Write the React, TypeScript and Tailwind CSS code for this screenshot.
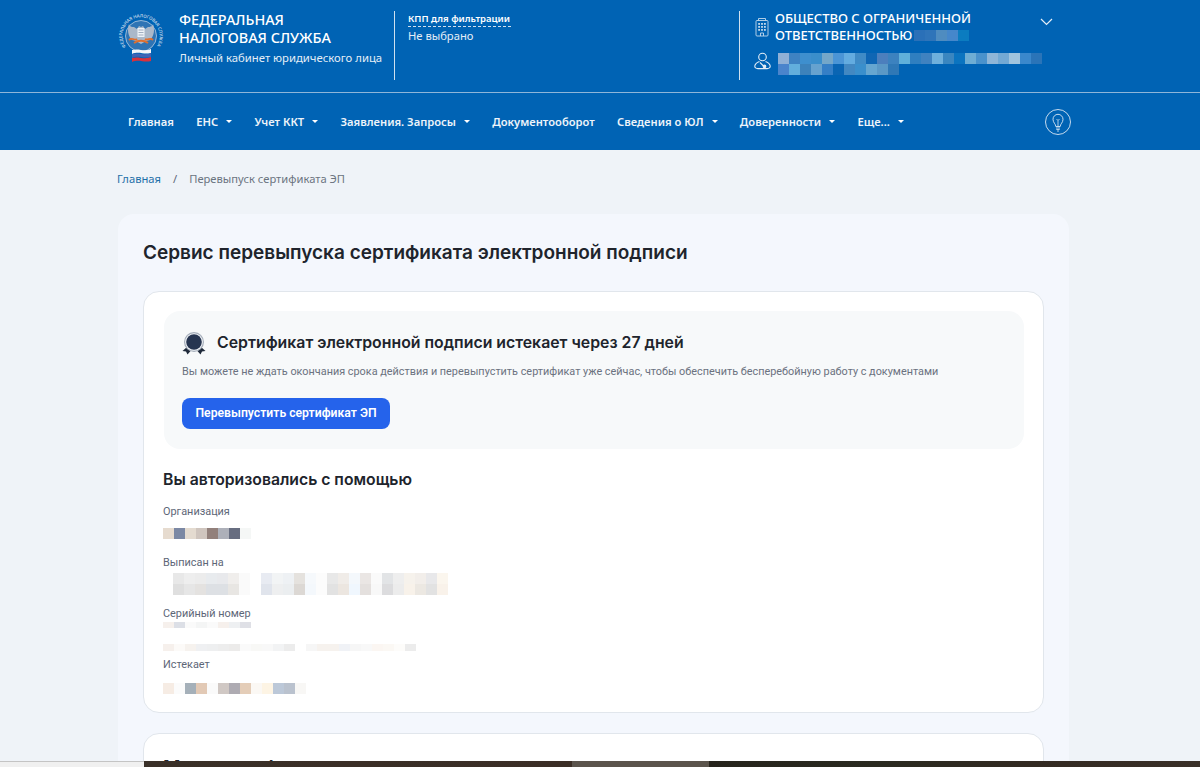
const navItems = [
  { name: "Главная" },
  { name: "ЕНС", arrow: true },
  { name: "Учет ККТ", arrow: true },
  { name: "Заявления. Запросы", arrow: true },
  { name: "Документооборот" },
  { name: "Сведения о ЮЛ", arrow: true },
  { name: "Доверенности", arrow: true },
  { name: "Еще...", arrow: true },
];

function Cells({ colors, size = "w-[11px] h-[11px]" }: { colors: string[]; size?: string }) {
  return (
    <div className="flex">
      {colors.map((c, i) => (
        <div key={i} className={size} style={{ backgroundColor: c }} />
      ))}
    </div>
  );
}

function Emblem() {
  return (
    <svg width="48" height="50" viewBox="0 0 48 50">
      <defs>
        <path id="emblem-ring" d="M9 34A18.600 18.600 0 1 1 39 34" />
      </defs>
      <text fontSize="4.500" fontWeight="600" fill="#b9d0e6" fontFamily="'Noto Sans', sans-serif">
        <textPath href="#emblem-ring" textLength="80">
          ФЕДЕРАЛЬНАЯ НАЛОГОВАЯ СЛУЖБА
        </textPath>
      </text>
      <circle cx="24" cy="23" r="15.500" fill="#2f74b4" stroke="#c9d8e8" strokeWidth="0.700" />
      <g transform="translate(0 1)">
        <path d="M12 10c1 3 3 3 5 3l3 2 2-3 2 1 2-1 2 3 3-2c2 0 4 0 5-3 2 6 1 12-3 16l-4 1-5 3-5-3-4-1c-4-4-5-10-3-16z" fill="#aab8c9" />
        <rect x="20.500" y="14" width="7" height="9" fill="#eef3f8" />
        <path d="M21.500 16h5M21.500 18.500h5M21.500 21h5" stroke="#8d9db2" strokeWidth="0.800" />
        <path d="M12 26c3-3 6 1 8-1M28 25c3 2 5-2 8 1M17 29c4-3 10-3 14 0" stroke="#e0702f" strokeWidth="1.800" fill="none" />
      </g>
      <path d="M15 37c7-2 12 2 19-1v4c-7 2-12-2-19 1z" fill="#f4f6fa" />
      <path d="M15 41c7-2 12 2 19-1v4c-7 2-12-2-19 1z" fill="#3f63b5" />
      <path d="M15 45c7-2 12 2 19-1v4c-7 2-12-2-19 1z" fill="#d8313c" />
    </svg>
  );
}

function BuildingIcon() {
  return (
    <svg width="14" height="20" viewBox="0 0 14 20" fill="none" stroke="#c3d9ec" strokeWidth="0.900">
      <path d="M3.500 3.500V1.500h7v2" />
      <rect x="1" y="3.500" width="12" height="15.500" rx="1" />
      <g fill="#c3d9ec" stroke="none">
        <rect x="3.200" y="6" width="1.800" height="1.800" />
        <rect x="6.100" y="6" width="1.800" height="1.800" />
        <rect x="9" y="6" width="1.800" height="1.800" />
        <rect x="3.200" y="9" width="1.800" height="1.800" />
        <rect x="6.100" y="9" width="1.800" height="1.800" />
        <rect x="9" y="9" width="1.800" height="1.800" />
        <rect x="3.200" y="12" width="1.800" height="1.800" />
        <rect x="6.100" y="12" width="1.800" height="1.800" />
        <rect x="9" y="12" width="1.800" height="1.800" />
      </g>
      <path d="M5.500 19v-3h3v3" />
    </svg>
  );
}

function PersonIcon() {
  return (
    <svg width="17" height="18" viewBox="0 0 17 18" fill="none" stroke="#e4eef7" strokeWidth="1.100">
      <circle cx="8.500" cy="5" r="3.800" />
      <path d="M5.500 9.500C3 10.500 1 12 .8 14c-.1 1.600 1.200 2.600 3 2.600h9.400c1.800 0 3.100-1 3-2.600-.2-2-2.200-3.500-4.700-4.500" />
      <path d="M6 10.500l3.500 3.500" />
      <circle cx="10.500" cy="14.300" r="1.300" fill="#e4eef7" />
    </svg>
  );
}

function BulbIcon() {
  return (
    <svg width="26" height="26" viewBox="0 0 26 26" fill="none" stroke="#dbe8f4">
      <circle cx="13" cy="13" r="12.500" strokeWidth="0.900" />
      <path d="M10.800 17.500c0-2.500-2.800-3.800-2.800-7.200a5 5 0 0 1 10 0c0 3.400-2.800 4.700-2.800 7.200z" strokeWidth="0.900" />
      <path d="M11 19h4M11.300 20.500h3.400M12 22h2M13 17.500v-6l-1.500-1.500M13 11.500l1.500-1.500" strokeWidth="0.800" />
    </svg>
  );
}

function MedalIcon() {
  return (
    <svg width="24" height="23" viewBox="0 0 24 23">
      <path d="M5 15l-4.500 4 3.500.5 1.500 3 3.500-4zM19 15l4.500 4-3.500.5-1.500 3-3.500-4z" fill="#1f2a3a" />
      <circle cx="12" cy="10" r="10" fill="#a4adb9" />
      <circle cx="12" cy="10" r="8.800" fill="#f5f7fa" />
      <circle cx="12" cy="10" r="7.800" fill="#263550" />
    </svg>
  );
}

function Arrow() {
  return <span className="ml-[8px] mb-[1px] w-0 h-0 border-x-[3px] border-x-transparent border-t-[3px] border-t-white" />;
}

function Field({
  label,
  className,
  children,
}: {
  label: string;
  className?: string;
  children: React.ReactNode;
}) {
  return (
    <div className={className}>
      <div className="font-['Roboto',sans-serif] text-[10.900px] leading-[16px] text-[#5d6677]">{label}</div>
      {children}
    </div>
  );
}

export default function App() {
  return (
    <div className="relative h-[767px] overflow-hidden bg-[#eff3f8] font-['Inter','Liberation_Sans',sans-serif]">
      <header className="bg-[#0063b4] text-white font-['Noto_Sans','Open_Sans',sans-serif]">
        <div className="h-[93px] border-b border-[#8fb6d9] flex pl-[117px] pt-[11px]">
          <div className="w-[277px] flex">
            <div className="w-[62px] mt-[2px]">
              <Emblem />
            </div>
            <div>
              <div className="text-[14.400px] leading-[18px] font-medium">
                ФЕДЕРАЛЬНАЯ
                <br />
                НАЛОГОВАЯ СЛУЖБА
              </div>
              <div className="mt-[3px] text-[11.300px] leading-[16px] text-[#e4eef7]">Личный кабинет юридического лица</div>
            </div>
          </div>
          <div className="w-[345px] h-[69px] border-l border-[#cfe0ef] pl-[13px]">
            <div className="w-[103px] mt-[1px] whitespace-nowrap text-[9.500px] leading-[14px] font-semibold border-b border-dashed border-[#cfe0ef]">
              КПП для фильтрации
            </div>
            <div className="mt-[1px] text-[11.200px] leading-[16px] text-[#e4eef7]">Не выбрано</div>
          </div>
          <div className="w-[320px] h-[69px] border-l border-[#cfe0ef] pl-[15px] relative">
            <div className="flex -mt-[1px]">
              <div className="mt-[7px] w-[20px]">
                <BuildingIcon />
              </div>
              <div className="text-[13px] leading-[17px] font-medium">
                ОБЩЕСТВО С ОГРАНИЧЕННОЙ
                <br />
                <span className="flex items-center">
                  ОТВЕТСТВЕННОСТЬЮ
                  <span className="ml-[2px]">
                    <Cells colors={["#2a70b8", "#2f74b9", "#4f8cc0", "#4587cb", "#0b7cc0"]} />
                  </span>
                </span>
              </div>
            </div>
            <div className="flex mt-[9px]">
              <div className="-mt-[1px] w-[24px] -ml-[1px]">
                <PersonIcon />
              </div>
              <div>
                <Cells
                  colors={["#8fb0d6", "#3e82c2", "#3e8fce", "#3a8ecb", "#74a7c9", "#4b95d6", "#63ace0", "#3f8bc6", "#0f66b4", "#4c7fbd", "#3c82bf", "#5fb0da", "#2f7fc0", "#3f82c0", "#6fb0dc", "#3a86c0", "#0b74c0", "#6eadd4", "#4a92cc", "#8fb6d8", "#73a9d4", "#a0c4de", "#3a88cc", "#2a74b8"]}
                />
                <Cells
                  colors={["#4a84cc", "#62aedc", "#3c82bb", "#66a2cf", "#357fc6", "#0a65b3", "#4288c2", "#3a8fcc", "#66a6d0", "#5a98c6", "#2f78b6"]}
                />
              </div>
            </div>
            <svg className="absolute left-[300px] top-[7px]" width="13" height="8" viewBox="0 0 13 8" fill="none" stroke="#e4eef7" strokeWidth="1.200">
              <path d="M1 1l5.500 5.500L12 1" />
            </svg>
          </div>
        </div>
        <nav className="h-[57px] flex items-center justify-between pl-[128px] pr-[129px]">
          <div className="flex items-center gap-[22.300px] pt-[1px] text-[11.200px] font-semibold text-[#eef4fa]">
            {navItems.map((item) => (
              <div key={item.name} className="flex items-center">
                {item.name}
                {item.arrow && <Arrow />}
              </div>
            ))}
          </div>
          <BulbIcon />
        </nav>
      </header>

      <div className="px-[117px] pt-[22px] flex items-center text-[11.200px] leading-[14px] font-['Noto_Sans',sans-serif]">
        <span className="text-[#1e6fa8]">Главная</span>
        <span className="mx-[12px] text-[#5d6677]">/</span>
        <span className="text-[#6b7480]">Перевыпуск сертификата ЭП</span>
      </div>

      <main className="ml-[118px] mt-[28px] w-[951px] rounded-[16px] bg-[#f4f7fd] px-[25px] pt-[26px] pb-[26px]">
        <h1 className="text-[19px] leading-[26px] font-semibold text-[#20242c]">
          Сервис перевыпуска сертификата электронной подписи
        </h1>

        <section className="mt-[25px] h-[422px] rounded-[16px] border border-[#e1e6ec] bg-white px-[19px] pt-[19px]">
          <div className="ml-[1px] h-[138px] rounded-[16px] bg-[#f7f9fa] pl-[18px] pr-[19px] pt-[20px]">
            <div className="flex items-center">
              <MedalIcon />
              <div className="ml-[11px] text-[15.850px] leading-[24px] font-semibold text-[#20242c]">
                Сертификат электронной подписи истекает через 27 дней
              </div>
            </div>
            <p className="mt-[9px] font-['Roboto',sans-serif] text-[10.870px] leading-[16px] text-[#6b7280]">
              Вы можете не ждать окончания срока действия и перевыпустить сертификат уже сейчас, чтобы обеспечить бесперебойную работу с документами
            </p>
            <button className="mt-[18px] h-[31px] w-[208px] rounded-[8px] bg-[#2563eb] font-['Roboto',sans-serif] text-[12.200px] font-semibold text-white">
              Перевыпустить сертификат ЭП
            </button>
          </div>

          <h2 className="mt-[19px] text-[15.750px] leading-[24px] font-semibold text-[#20242c]">Вы авторизовались с помощью</h2>

          <Field label="Организация" className="mt-[12px]">
            <div className="mt-[8px]">
              <Cells colors={["#e6dbcf", "#7b88a4", "#e4dbd0", "#cfc5be", "#92807b", "#adb0b9", "#676d80", "#f5f7f6"]} />
            </div>
          </Field>
          <Field label="Выписан на" className="mt-[16px]">
            <div className="flex ml-[10px] mt-[2px]">
              <div className="flex flex-col">
                <Cells colors={["#e8e8e8", "#eeeeee", "#ececec", "#e8ebee", "#e8e9ec", "#f0eeec", "#fafafa"]} />
                <Cells colors={["#dfdfdf", "#e6e6e6", "#e4e2e0", "#dde0e4", "#dde0e4", "#e8e6e3", "#fafafa"]} />
              </div>
              <div className="flex flex-col ml-[11px]">
                <Cells colors={["#e8ebf2", "#f2f4f5", "#eef1f4", "#e5e2de", "#f6f9fc", "#fcfcfc", "#e8e8e8", "#f0ece8", "#f4f8fc", "#eae6e4", "#fafafa", "#e2e4e6", "#eeeeee", "#f6f2ec", "#f2eeea", "#e8e8ea", "#fbf6ee"]} />
                <Cells colors={["#e0e4ec", "#eeeff0", "#ebeef0", "#dcd8d4", "#f4f8fc", "#fcfcfc", "#e2e2e2", "#ece6e0", "#f0f7fe", "#e4e0de", "#f8f8f8", "#dcdcde", "#ececec", "#f8f2ea", "#ece8e2", "#e2e2e2", "#f9f2ea"]} />
              </div>
            </div>
          </Field>
          <Field label="Серийный номер" className="mt-[11px]">
            <div>
              <Cells size="w-[11px] h-[6px]" colors={["#f6f0ec", "#dcdfe6", "#fafafa", "#f4f5f5", "#fafafa", "#f6f0ec", "#eef0f2", "#dfe0e6"]} />
            </div>
            <div className="mt-[16px]">
              <Cells size="w-[11px] h-[7px]" colors={["#f6f0ec", "#fcfaf8", "#f6f2ee", "#eff0f2", "#eeeff0", "#ededed", "#ecebea", "#fafafa", "#f8f8f6", "#f8f8f8", "#f2f3f4", "#ececec", "#ffffff", "#f6f6f6", "#f6f2ee", "#f6f2ee", "#f0f2f6", "#f6f6f6", "#f8f8f8", "#fbf6f2", "#fbf8f4", "#fdfcfa", "#ececec"]} />
            </div>
          </Field>
          <Field label="Истекает" className="mt-[6px]">
            <div className="mt-[10px]">
              <Cells colors={["#f6ece4", "#fbfbfb", "#a5b0b9", "#e2c9b5", "#fafafa", "#d0c8c4", "#aeabb2", "#e4cdb8", "#fbf8f4", "#fdf4e4", "#bcc8d8", "#bac2ce", "#f8f7f5"]} />
            </div>
          </Field>
        </section>

        <section className="mt-[20px] h-[120px] rounded-[16px] border border-[#e1e6ec] bg-white pl-[19px] pt-[22px]">
          <div className="text-[19px] leading-[24px] font-semibold text-[#20242c]">Мои сертификаты</div>
        </section>
      </main>

      <div className="absolute left-0 right-0 bottom-0 h-[6px] flex">
        <div className="w-[144px] bg-[#f0f0f0] border-t border-[#c4c4c4]" />
        <div className="w-[428px] bg-[linear-gradient(90deg,#3a3028,#3b2e26)]" />
        <div className="w-[137px] bg-[#5b544c]" />
        <div className="flex-1 bg-[linear-gradient(90deg,#26241c,#2a2a20,#332a22,#3a3028)]" />
      </div>
    </div>
  );
}
